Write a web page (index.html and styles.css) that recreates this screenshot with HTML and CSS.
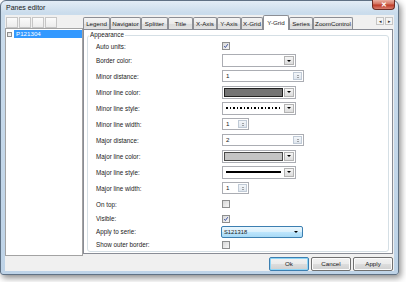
FILE: index.html
```html
<!DOCTYPE html>
<html>
<head>
<meta charset="utf-8">
<link rel="stylesheet" href="styles.css">
</head>
<body>
<div class="window">
  <div class="titlebar">
    <span class="title">Panes editor</span>
    <span class="close">✕</span>
  </div>
  <div class="client">
    <div class="main">
      <div class="left">
        <div class="toolbar">
          <span class="tbtn"></span><span class="tbtn"></span><span class="tbtn"></span><span class="tbtn"></span>
        </div>
        <div class="tree">
          <div class="node"><span class="nodebox"></span><span class="nodelabel">P121304</span></div>
        </div>
      </div>
      <div class="tabs">
        <div class="tabstrip">
          <span class="tab t-legend">Legend</span>
          <span class="tab t-nav">Navigator</span>
          <span class="tab t-split">Splitter</span>
          <span class="tab t-title">Title</span>
          <span class="tab t-axis">X-Axis</span>
          <span class="tab t-axis">Y-Axis</span>
          <span class="tab t-grid">X-Grid</span>
          <span class="tab active">Y-Grid</span>
          <span class="tab t-series">Series</span>
          <span class="tab t-zoom">ZoomControl</span>
          <span class="scroller"><span class="sbtn">◂</span><span class="sbtn">▸</span></span>
        </div>
        <div class="page">
          <fieldset class="group">
            <legend>Appearance</legend>
            <div class="form">
              <span class="label">Auto units:</span>
              <span class="check checked"><svg viewBox="0 0 8 8"><path d="M1.6 4.2 L3.2 6 L6.4 1.6"/></svg></span>

              <span class="label">Border color:</span>
              <span class="combo"><span class="field"></span><span class="dbtn"><i></i></span></span>

              <span class="label">Minor distance:</span>
              <span class="spin wide"><span class="val">1</span><span class="sbox"><i class="up"></i><i class="down"></i></span></span>

              <span class="label">Minor line color:</span>
              <span class="combo"><span class="swatch dark"></span><span class="dbtn"><i></i></span></span>

              <span class="label">Minor line style:</span>
              <span class="combo"><span class="field"><span class="dots"></span></span><span class="dbtn"><i></i></span></span>

              <span class="label">Minor line width:</span>
              <span class="spin narrow"><span class="val">1</span><span class="sbox"><i class="up"></i><i class="down"></i></span></span>

              <span class="label">Major distance:</span>
              <span class="spin wide"><span class="val">2</span><span class="sbox"><i class="up"></i><i class="down"></i></span></span>

              <span class="label">Major line color:</span>
              <span class="combo"><span class="swatch light"></span><span class="dbtn"><i></i></span></span>

              <span class="label">Major line style:</span>
              <span class="combo"><span class="field"><span class="solid"></span></span><span class="dbtn"><i></i></span></span>

              <span class="label">Major line width:</span>
              <span class="spin narrow"><span class="val">1</span><span class="sbox"><i class="up"></i><i class="down"></i></span></span>

              <span class="label">On top:</span>
              <span class="check"></span>

              <span class="label">Visible:</span>
              <span class="check checked"><svg viewBox="0 0 8 8"><path d="M1.6 4.2 L3.2 6 L6.4 1.6"/></svg></span>

              <span class="label">Apply to serie:</span>
              <span class="serie"><span class="sval">S121318</span><i></i></span>

              <span class="label">Show outer border:</span>
              <span class="check"></span>
            </div>
          </fieldset>
        </div>
      </div>
    </div>
    <div class="buttons">
      <span class="btn default">Ok</span>
      <span class="btn">Cancel</span>
      <span class="btn">Apply</span>
    </div>
  </div>
</div>
</body>
</html>
```
FILE: styles.css
```css
* { box-sizing: border-box; }
html, body { margin: 0; padding: 0; background: #fff; }
body {
  font-family: "Liberation Sans", Arial, sans-serif;
  font-size: 6.3px;
  color: #1a1a1a;
  width: 406px;
  height: 282px;
  overflow: hidden;
}
.window {
  width: 399px;
  height: 275px;
  border: 1px solid #5f7184;
  border-radius: 6px 6px 3px 3px;
  background: linear-gradient(180deg, #e3edf6 0, #cadcec 12px, #bed3e7 100%);
  padding: 0 4px 4px;
  box-shadow: 2px 3px 6px rgba(0, 0, 0, 0.45);
  display: flex;
  flex-direction: column;
}
.titlebar {
  height: 14px;
  flex: none;
  display: flex;
  align-items: flex-start;
  justify-content: space-between;
}
.title {
  font-size: 7px;
  line-height: 8px;
  padding: 3px 0 0 1px;
  color: #1a1a1a;
}
.close {
  width: 23px;
  height: 10px;
  margin: -1px -1px 0 0;
  border: 1px solid #6b2a22;
  border-top: none;
  border-radius: 0 0 4px 4px;
  background: linear-gradient(180deg, #eab0a2 0, #d4725f 45%, #bd3a26 55%, #d98070 100%);
  color: #fff;
  font-size: 6.5px;
  font-weight: bold;
  line-height: 9px;
  text-align: center;
}
.client {
  flex: 1;
  background: #f0f0f0;
  display: flex;
  flex-direction: column;
}
.main {
  height: 241px;
  display: flex;
}
.left {
  width: 78px;
  display: flex;
  flex-direction: column;
}
.toolbar {
  height: 13px;
  display: flex;
  gap: 1px;
  padding: 2px 0 0 1px;
}
.tbtn {
  width: 12px;
  height: 11px;
  border: 1px solid #c6c6c6;
  background: linear-gradient(180deg, #fbfbfb, #ececec);
}
.tree {
  flex: 1;
  background: #fff;
  border: 1px solid #a3a3a3;
  padding-top: 1px;
}
.node {
  height: 8px;
  display: flex;
  align-items: center;
}
.nodebox {
  width: 5px;
  height: 5px;
  margin-left: 1px;
  border: 1px solid #8e8f8f;
  background: linear-gradient(135deg, #dedede, #f8f8f8);
}
.nodelabel {
  flex: 1;
  height: 8px;
  margin-left: 2px;
  background: #3399ff;
  color: #fff;
  line-height: 8px;
  padding-left: 2px;
  font-size: 6.2px;
}
.tabs {
  flex: 1;
  display: flex;
  flex-direction: column;
  margin-right: 1px;
}
.tabstrip {
  height: 14px;
  display: flex;
  align-items: flex-end;
}
.tab {
  height: 12px;
  border: 1px solid #8c8e94;
  border-bottom: none;
  border-radius: 2px 2px 0 0;
  background: linear-gradient(180deg, #f4f4f4 0, #eaeaea 50%, #dadada 51%, #e2e2e2 100%);
  font-size: 6.2px;
  line-height: 11px;
  text-align: center;
  white-space: nowrap;
  flex: none;
}
.t-legend { width: 27px; }
.t-nav { width: 31px; }
.t-split { width: 27px; }
.t-title { width: 25px; }
.t-axis { width: 24px; }
.t-grid { width: 22px; }
.t-series { width: 24px; }
.t-zoom { width: 40px; }
.tab.active {
  width: 26px;
  height: 15px;
  margin-bottom: -1px;
  background: #fff;
  line-height: 13px;
  position: relative;
  z-index: 1;
}
.scroller {
  margin-left: auto;
  align-self: flex-start;
  margin-top: 2px;
  display: flex;
  gap: 1px;
}
.sbtn {
  width: 8px;
  height: 8px;
  border: 1px solid #c4c4c4;
  background: #f4f4f4;
  font-size: 5px;
  line-height: 6px;
  text-align: center;
  color: #333;
}
.page {
  flex: 1;
  margin-bottom: 2px;
  background: #fff;
  border: 1px solid #898c95;
  padding: 1px 3px 0;
}
.group {
  margin: 0;
  border: 1px solid #d5dfe5;
  border-radius: 3px;
  padding: 0 0 0 8px;
  min-width: 0;
}
.group legend {
  padding: 0 1px;
  margin-left: -7px;
  line-height: 8px;
  font-size: 6.3px;
}
.form {
  display: grid;
  grid-template-columns: 126px 1fr;
  grid-template-rows: 14px 15px repeat(9, 16px) 13px 13px 13px;
  align-items: center;
}
.label { white-space: nowrap; }
.check {
  width: 8px;
  height: 8px;
  border: 1px solid #8e8f8f;
  background: linear-gradient(135deg, #d8d8d8, #f6f6f6);
  display: flex;
}
.check svg { width: 6px; height: 6px; }
.check path { fill: none; stroke: #3a4f9c; stroke-width: 1.3; }
.combo {
  width: 74px;
  height: 13px;
  border: 1px solid #abadb3;
  background: #fff;
  display: flex;
  padding: 1px;
  gap: 1px;
}
.field {
  flex: 1;
  display: flex;
  align-items: center;
  padding: 0 2px;
}
.dbtn {
  width: 10px;
  border: 1px solid #b3b3b3;
  background: linear-gradient(180deg, #f6f6f6, #dcdcdc);
  display: flex;
  align-items: center;
  justify-content: center;
}
.dbtn i, .serie i {
  width: 0;
  height: 0;
  border-top: 2px solid #000;
  border-left: 2px solid transparent;
  border-right: 2px solid transparent;
}
.swatch { flex: 1; border: 1px solid #222; }
.swatch.dark { background: #747474; }
.swatch.light { background: #c4c4c4; border-color: #4a4a4a; }
.dots {
  flex: 1;
  height: 2px;
  background: repeating-linear-gradient(90deg, #000 0 1.7px, transparent 1.7px 3.5px);
}
.solid { flex: 1; height: 2px; background: #000; }
.spin {
  height: 12px;
  border: 1px solid #abadb3;
  background: #fff;
  display: flex;
  padding: 1px;
}
.spin.wide { width: 82px; }
.spin.narrow { width: 27px; }
.val { flex: 1; padding-left: 2px; line-height: 8px; font-size: 6.2px; }
.sbox {
  width: 9px;
  border: 1px solid #c0cad6;
  background: linear-gradient(180deg, #f3f6f9, #dfe6ee);
  display: flex;
  flex-direction: column;
  align-items: center;
  justify-content: center;
  gap: 1px;
}
.sbox .up, .sbox .down {
  width: 0;
  height: 0;
  border-left: 1.5px solid transparent;
  border-right: 1.5px solid transparent;
}
.sbox .up { border-bottom: 1.5px solid #555; }
.sbox .down { border-top: 1.5px solid #555; }
.serie {
  width: 82px;
  height: 12px;
  margin-left: -1px;
  border: 1px solid #3c7fb1;
  border-radius: 2px;
  background: linear-gradient(180deg, #eaf6fd 0, #d9f0fc 50%, #bee6fd 51%, #a7d9f5 100%);
  display: flex;
  align-items: center;
  padding: 0 4px 0 2px;
}
.sval { flex: 1; font-size: 5.8px; line-height: 10px; }
.buttons {
  flex: 1;
  display: flex;
  justify-content: flex-end;
  gap: 2px;
  padding: 1px 1px 0 0;
}
.btn {
  width: 40px;
  height: 14px;
  border: 1px solid #707070;
  border-radius: 2px;
  background: linear-gradient(180deg, #f2f2f2 0, #ebebeb 50%, #dddddd 51%, #cfcfcf 100%);
  box-shadow: inset 0 0 0 1px #fbfbfb;
  font-size: 6.2px;
  line-height: 12px;
  text-align: center;
}
.btn.default {
  border-color: #3c7fb1;
  box-shadow: inset 0 0 0 1px #8fd6f7;
}
```
